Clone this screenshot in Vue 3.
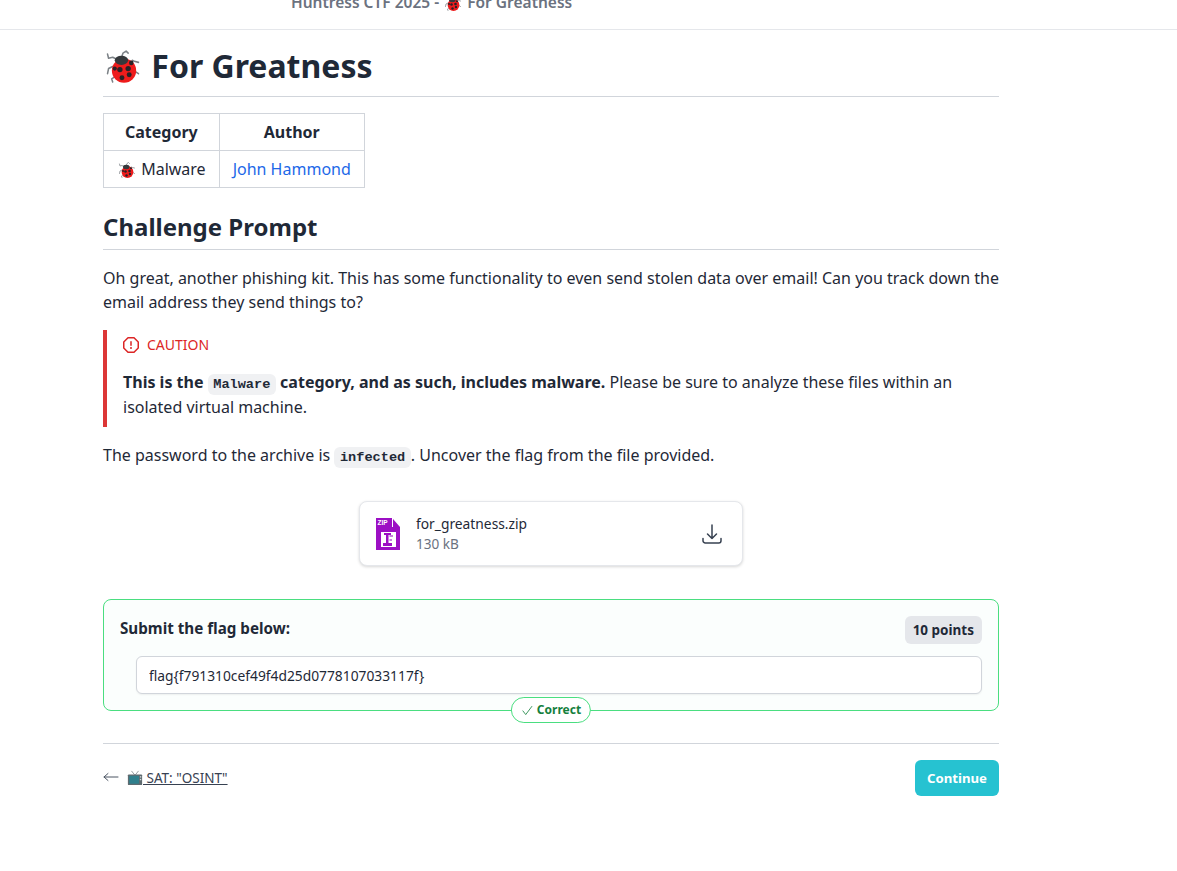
<script setup>
const flag = 'flag{f791310cef49f4d25d0778107033117f}'
</script>

<template>
  <svg class="defs" aria-hidden="true">
    <symbol id="ladybug" viewBox="0 0 32 32">
      <g stroke="#7c8287" stroke-width="1.5" fill="none" stroke-linecap="round" stroke-linejoin="round">
        <path d="M10 9 6 7 2 8 1 4" />
        <path d="M15 6 16 3 19 1 21 3" />
        <path d="M6 16 2 18 1 23" />
        <path d="M8 26 5 28 6 31" />
        <path d="M25 10 27 11 31 12" />
        <path d="M28 21 31 23" />
      </g>
      <circle cx="17" cy="20" r="11.8" fill="#ee1c1c" />
      <ellipse cx="14.5" cy="10" rx="6.5" ry="4.5" fill="#35393c" />
      <g fill="#2a2226">
        <circle cx="8" cy="18" r="2" />
        <circle cx="13" cy="19" r="2.6" />
        <circle cx="21" cy="18" r="2.6" />
        <circle cx="24" cy="12.5" r="2.2" />
        <circle cx="15" cy="27" r="2.4" />
        <circle cx="22" cy="24" r="2.4" />
      </g>
    </symbol>
  </svg>

  <header class="topbar">
    <span class="topbar-title">Huntress CTF 2025 - <svg class="bug bug-sm"><use href="#ladybug" /></svg> For Greatness</span>
  </header>

  <main class="page">
    <h1 class="title"><svg class="bug bug-lg"><use href="#ladybug" /></svg> For Greatness</h1>

    <table class="meta">
      <thead>
        <tr>
          <th>Category</th>
          <th>Author</th>
        </tr>
      </thead>
      <tbody>
        <tr>
          <td><svg class="bug bug-sm"><use href="#ladybug" /></svg> Malware</td>
          <td><a href="#" class="author">John Hammond</a></td>
        </tr>
      </tbody>
    </table>

    <h2 class="subtitle">Challenge Prompt</h2>

    <p class="para">
      Oh great, another phishing kit. This has some functionality to even send stolen data over email! Can you track down the email address they send things to?
    </p>

    <div class="alert">
      <div class="alert-title">
        <svg class="alert-icon" viewBox="0 0 16 16" fill="currentColor">
          <path d="M4.47.22A.749.749 0 0 1 5 0h6c.199 0 .389.079.53.22l4.25 4.25c.141.14.22.331.22.53v6a.749.749 0 0 1-.22.53l-4.25 4.25A.749.749 0 0 1 11 16H5a.749.749 0 0 1-.53-.22L.22 11.53A.749.749 0 0 1 0 11V5c0-.199.079-.389.22-.53Zm.84 1.28L1.5 5.31v5.38l3.81 3.81h5.38l3.81-3.81V5.31L10.69 1.5ZM8 4a.75.75 0 0 1 .75.75v3.5a.75.75 0 0 1-1.5 0v-3.5A.75.75 0 0 1 8 4Zm0 8a1 1 0 1 1 0-2 1 1 0 0 1 0 2Z" />
        </svg>
        <span>CAUTION</span>
      </div>
      <p class="alert-body">
        <strong>This is the <code>Malware</code> category, and as such, includes malware.</strong> Please be sure to analyze these files within an isolated virtual machine.
      </p>
    </div>

    <p class="para">The password to the archive is <code>infected</code>. Uncover the flag from the file provided.</p>

    <div class="download-wrap">
      <div class="download">
        <svg class="zip" viewBox="0 0 24 32">
          <path d="M0 0H16V9H24V32H0Z" fill="#9c0fc4" />
          <path d="M17 1 24 9H17Z" fill="#9c0fc4" />
          <text x="1.5" y="7" font-size="6.5" font-weight="700" fill="#fff" font-family="Liberation Sans, sans-serif">ZIP</text>
          <rect x="5" y="14" width="15" height="15" fill="#fff" />
          <path d="M8 15H15V17H12.5V25H16V28H7V25H10V17H8Z" fill="#9c0fc4" />
          <path d="M13.5 17H17V19H13.5ZM13.5 21H16V23H13.5Z" fill="#c77fdd" />
        </svg>
        <div class="file-info">
          <div class="file-name">for_greatness.zip</div>
          <div class="file-size">130 kB</div>
        </div>
        <svg class="dl-icon" viewBox="0 0 24 24" fill="none" stroke="currentColor" stroke-width="1.5" stroke-linecap="round" stroke-linejoin="round">
          <path d="M3 16.5v2.25A2.25 2.25 0 0 0 5.25 21h13.5A2.25 2.25 0 0 0 21 18.75V16.5M16.5 12 12 16.5m0 0L7.5 12m4.5 4.5V3" />
        </svg>
      </div>
    </div>

    <section class="submit">
      <div class="submit-head">
        <span class="submit-label">Submit the flag below:</span>
        <span class="points">10 points</span>
      </div>
      <div class="flag-row">
        <input class="flag-input" type="text" :value="flag" readonly />
      </div>
      <div class="correct">
        <svg class="check" viewBox="0 0 16 16" fill="none" stroke="currentColor" stroke-width="1" stroke-linecap="round" stroke-linejoin="round">
          <path d="M2.5 8.5 6 13 13.5 3" />
        </svg>
        <span>Correct</span>
      </div>
    </section>

    <nav class="pager">
      <div class="prev">
        <svg class="arrow" viewBox="0 0 16 10" fill="none" stroke="currentColor" stroke-width="1" stroke-linecap="round" stroke-linejoin="round">
          <path d="M15 5H1M5 1.5 1 5 5 8.5" />
        </svg>
        <a href="#" class="prev-link">
          <svg class="tv" viewBox="0 0 18 18">
            <path d="M9 6 5 1M9 6 13 1" stroke="#8a9196" stroke-width="1" fill="none" />
            <rect x="1" y="5" width="16" height="12" rx="1" fill="#5f6b70" />
            <rect x="2.5" y="6.5" width="11" height="9" rx="1" fill="#2f7f8c" />
            <rect x="14.5" y="7" width="1.5" height="1.5" fill="#d8dde0" />
            <rect x="14.5" y="10" width="1.5" height="1.5" fill="#d8dde0" />
          </svg>
          SAT: "OSINT"
        </a>
      </div>
      <button class="continue" type="button">Continue</button>
    </nav>
  </main>
</template>

<style>
html,
body {
  background: #fff;
}
</style>

<style scoped>
.defs {
  position: absolute;
  width: 0;
  height: 0;
}

.topbar {
  height: 29px;
  border-bottom: 1px solid #e5e7eb;
  overflow: hidden;
  padding-left: 291px;
  font-family: "Noto Sans", sans-serif;
}
.topbar-title {
  display: block;
  margin-top: -10px;
  font-size: 15.5px;
  line-height: 24px;
  font-weight: 600;
  color: #6b7280;
}

.page {
  width: 896px;
  margin-left: 103px;
  padding-bottom: 75px;
  font-family: "Noto Sans", sans-serif;
  font-size: 16px;
  line-height: 24px;
  color: #1f2937;
}

.bug {
  display: inline-block;
  vertical-align: -3px;
}
.bug-sm {
  width: 20px;
  height: 16px;
}
.bug-lg {
  width: 40px;
  height: 33px;
  vertical-align: -5px;
}

.title {
  margin: 12px 0 16px;
  padding-bottom: 6px;
  border-bottom: 1px solid #d1d5db;
  font-size: 32px;
  line-height: 48px;
  font-weight: 700;
}

.meta {
  border-collapse: collapse;
}
.meta th,
.meta td {
  border: 1px solid #d1d5db;
  padding: 6px 13px;
  height: 37px;
  box-sizing: border-box;
  text-align: center;
  font-size: 16px;
}
.meta th {
  font-weight: 700;
}
.author {
  color: #1d68e8;
  text-decoration: none;
}

.subtitle {
  margin: 21px 0 16px;
  padding-bottom: 4px;
  border-bottom: 1px solid #d1d5db;
  font-size: 24px;
  line-height: 36px;
  font-weight: 700;
}

.para {
  margin: 0 0 16px;
}

code {
  display: inline-block;
  padding: 0 5.6px;
  border-radius: 6px;
  background: #f0f1f3;
  font-family: "Liberation Mono", monospace;
  font-size: 13.6px;
  line-height: 21px;
  font-weight: 700;
  margin: -2px 0;
}

.alert {
  margin: 0 0 16px;
  padding: 4px 16px 7px;
  border-left: 4px solid #dc3636;
}
.alert-title {
  display: flex;
  align-items: center;
  gap: 8px;
  height: 22px;
  margin-bottom: 14px;
  color: #dc2626;
  font-size: 14px;
}
.alert-icon {
  width: 16px;
  height: 16px;
}
.alert-body {
  margin: 0;
  line-height: 25px;
}

.download-wrap {
  display: flex;
  justify-content: center;
  margin: 34px 0 33px;
}
.download {
  display: flex;
  align-items: center;
  box-sizing: border-box;
  width: 384px;
  height: 65px;
  padding: 1px 18px 0 16px;
  border: 1px solid #e5e7eb;
  border-radius: 8px;
  background: #fff;
  box-shadow: 0 1px 3px rgba(0, 0, 0, 0.16);
}
.zip {
  width: 24px;
  height: 32px;
  flex: none;
}
.file-info {
  flex: 1;
  margin-left: 16px;
}
.file-name {
  font-size: 13.8px;
  line-height: 20px;
}
.file-size {
  font-size: 13.6px;
  line-height: 20px;
  color: #6b7280;
}
.dl-icon {
  width: 24px;
  height: 24px;
  color: #374151;
}

.submit {
  position: relative;
  box-sizing: border-box;
  height: 112px;
  padding: 16px;
  border: 1px solid #4ade80;
  border-radius: 8px;
  background: #fbfefd;
}
.submit-head {
  display: flex;
  align-items: center;
  justify-content: space-between;
  height: 28px;
}
.submit-label {
  padding-bottom: 4px;
  font-size: 15.2px;
  font-weight: 700;
}
.points {
  padding: 4px 8px;
  border-radius: 6px;
  background: #e5e7eb;
  font-size: 13.5px;
  line-height: 20px;
  font-weight: 700;
}
.flag-row {
  margin: 12px 0 0 16px;
}
.flag-input {
  display: block;
  box-sizing: border-box;
  width: 100%;
  height: 38px;
  padding: 0 12px;
  border: 1px solid #d1d5db;
  border-radius: 6px;
  outline: none;
  background: #fff;
  box-shadow: 0 1px 2px rgba(0, 0, 0, 0.06);
  font-family: "Noto Sans", sans-serif;
  font-size: 13.8px;
  color: #1f2937;
}
.correct {
  position: absolute;
  left: 50%;
  bottom: -13px;
  transform: translateX(-50%);
  display: flex;
  align-items: center;
  gap: 3px;
  box-sizing: border-box;
  height: 26px;
  padding: 0 9px;
  border: 1px solid #4ade80;
  border-radius: 13px;
  background: #fff;
  color: #15803d;
  font-size: 12px;
  font-weight: 700;
}
.check {
  width: 13px;
  height: 13px;
}

.pager {
  display: flex;
  align-items: center;
  justify-content: space-between;
  margin-top: 32px;
  padding-top: 16px;
  border-top: 1px solid #d1d5db;
}
.prev {
  display: flex;
  align-items: center;
  gap: 8px;
}
.arrow {
  width: 16px;
  height: 10px;
  color: #4b5563;
  margin-top: -3px;
}
.prev-link {
  color: #374151;
  font-size: 13.5px;
  line-height: 20px;
  text-decoration: underline;
}
.tv {
  display: inline-block;
  width: 16px;
  height: 16px;
  vertical-align: -3px;
}
.continue {
  box-sizing: border-box;
  width: 84px;
  height: 36px;
  border: none;
  border-radius: 6px;
  background: #26c2d1;
  color: #fff;
  font-family: "Noto Sans", sans-serif;
  font-size: 13.2px;
  font-weight: 700;
}
</style>
